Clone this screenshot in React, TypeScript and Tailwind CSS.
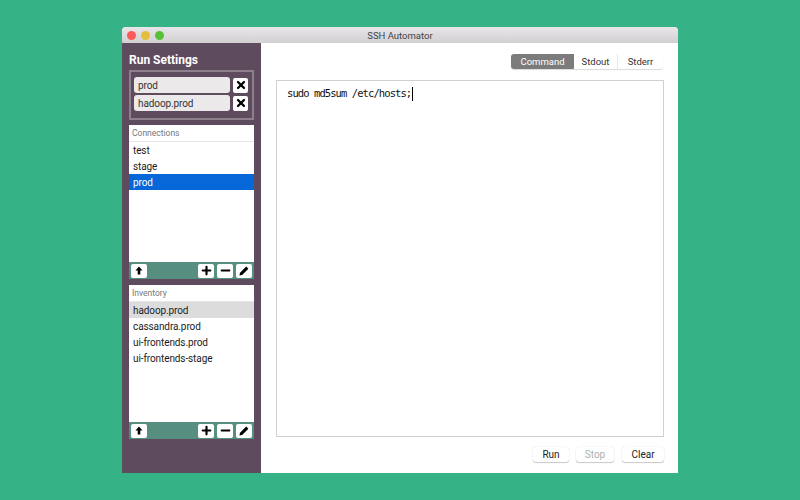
import { Minus, Plus, X } from 'lucide-react';
import type { ReactNode } from 'react';

const sans = "font-['Roboto','Liberation_Sans',sans-serif]";

function ToolButton({ children }: { children: ReactNode }) {
  return (
    <button className="flex h-[14px] w-[16px] items-center justify-center rounded-[2px] bg-white text-black">
      {children}
    </button>
  );
}

function ArrowIcon() {
  return (
    <svg width="8" height="9" viewBox="0 0 8 9" fill="black">
      <path d="M4 0.5 L7.5 4.5 H5.3 V8.5 H2.7 V4.5 H0.5 Z" />
    </svg>
  );
}

function PencilIcon() {
  return (
    <svg width="10" height="10" viewBox="0 0 10 10" fill="black">
      <path d="M7.2 0.6 L9.4 2.8 L3.2 9 L0.4 9.6 L1 6.8 Z" />
    </svg>
  );
}

function ListPanel({
  title,
  items,
  selected,
  selectedClass,
}: {
  title: string;
  items: string[];
  selected: string;
  selectedClass: string;
}) {
  return (
    <section className="flex h-[154px] w-[125px] flex-col bg-white">
      <div className="h-[17px] border-b border-[#e6e6e6] pl-[3px] text-[8.5px] leading-[17px] text-[#777]">{title}</div>
      <ul className="flex-1 text-[10px] tracking-[-0.1px] text-[#1c1c1c]">
        {items.map((item) => (
          <li key={item} className={`h-[16px] pl-[4px] leading-[17px] ${item === selected ? selectedClass : ''}`}>
            {item}
          </li>
        ))}
      </ul>
      <div className="flex h-[17px] items-center bg-[#568f80] px-[2px]">
        <ToolButton>
          <ArrowIcon />
        </ToolButton>
        <div className="ml-auto flex gap-[3px]">
          <ToolButton>
            <Plus size={13} strokeWidth={4} />
          </ToolButton>
          <ToolButton>
            <Minus size={13} strokeWidth={4} />
          </ToolButton>
          <ToolButton>
            <PencilIcon />
          </ToolButton>
        </div>
      </div>
    </section>
  );
}

function Chip({ label }: { label: string }) {
  return (
    <div className="flex items-center gap-[3px]">
      <div className="h-[16px] w-[96px] rounded-[3px] bg-[#ebe9ea] pl-[4px] text-[10px] leading-[17px] tracking-[-0.1px] text-[#333]">
        {label}
      </div>
      <button className="flex h-[15px] w-[15px] items-center justify-center rounded-[2px] bg-white text-black">
        <X size={12} strokeWidth={4.5} />
      </button>
    </div>
  );
}

function ActionButton({ label, width, disabled }: { label: string; width: string; disabled?: boolean }) {
  return (
    <button
      className={`h-[15px] ${width} rounded-[3px] bg-white text-[10px] leading-[15px] shadow-[0_1px_1px_rgba(0,0,0,0.2),0_0_1px_rgba(0,0,0,0.2)] ${
        disabled ? 'text-[#b0b0b0]' : 'text-[#222]'
      }`}
    >
      {label}
    </button>
  );
}

export default function App() {
  return (
    <div className={`h-[500px] w-[800px] overflow-hidden bg-[#35b286] pl-[122px] pt-[27px] ${sans}`}>
      <div className="flex h-[446px] w-[556px] flex-col overflow-hidden rounded-t-[4px] bg-white">
        <header className="relative flex h-[16px] items-center bg-gradient-to-b from-[#e8e6e8] to-[#d2d0d2] pl-[5px]">
          <div className="flex gap-[5px]">
            <span className="h-[9px] w-[9px] rounded-full bg-[#fc5b57]" />
            <span className="h-[9px] w-[9px] rounded-full bg-[#e5bf3c]" />
            <span className="h-[9px] w-[9px] rounded-full bg-[#57c038]" />
          </div>
          <div className="absolute inset-x-0 text-center text-[9.5px] leading-[17px] text-[#444]">SSH Automator</div>
        </header>

        <div className="flex flex-1">
          <aside className="flex w-[139px] flex-col bg-[#5f4b5e] pl-[7px]">
            <h2 className="mt-[9px] text-[12px] font-bold leading-[16px] text-white">Run Settings</h2>
            <div className="mt-[2px] flex h-[50px] w-[125px] flex-col gap-[2px] border-2 border-[#8d7f8c] pl-[3px] pt-[5px]">
              <Chip label="prod" />
              <Chip label="hadoop.prod" />
            </div>
            <div className="mt-[5px] flex flex-col gap-[6px]">
              <ListPanel
                title="Connections"
                items={['test', 'stage', 'prod']}
                selected="prod"
                selectedClass="bg-[#0567d8] text-white"
              />
              <ListPanel
                title="Inventory"
                items={['hadoop.prod', 'cassandra.prod', 'ui-frontends.prod', 'ui-frontends-stage']}
                selected="hadoop.prod"
                selectedClass="bg-[#dcdcdc]"
              />
            </div>
          </aside>

          <main className="flex flex-1 flex-col pl-[15px] pr-[14px]">
            <div className="mt-[11px] flex justify-end pr-px">
              <div className="flex h-[15px] rounded-[3px] bg-white text-[9.5px] leading-[15px] text-[#333] shadow-[0_1px_1px_rgba(0,0,0,0.15)]">
                <div className="w-[63px] rounded-l-[3px] bg-[#7b7b7b] text-center text-white">Command</div>
                <div className="w-[44px] border-r border-[#e8e8e8] text-center">Stdout</div>
                <div className="w-[45px] text-center">Stderr</div>
              </div>
            </div>
            <div className="mt-[11px] h-[357px] border border-[#d0d0d0] pl-[10px] pt-[6px]">
              <div className="flex h-[14px] items-center font-['DejaVu_Sans_Mono',monospace] text-[10.5px] tracking-[-0.92px] text-[#111]">
                sudo md5sum /etc/hosts;
                <span className="ml-[1px] h-[14px] w-px bg-black" />
              </div>
            </div>
            <div className="mt-[10px] flex justify-end">
              <ActionButton label="Run" width="w-[36px]" />
              <div className="w-[7px]" />
              <ActionButton label="Stop" width="w-[38px]" disabled />
              <div className="w-[8px]" />
              <ActionButton label="Clear" width="w-[42px]" />
            </div>
          </main>
        </div>
      </div>
    </div>
  );
}
